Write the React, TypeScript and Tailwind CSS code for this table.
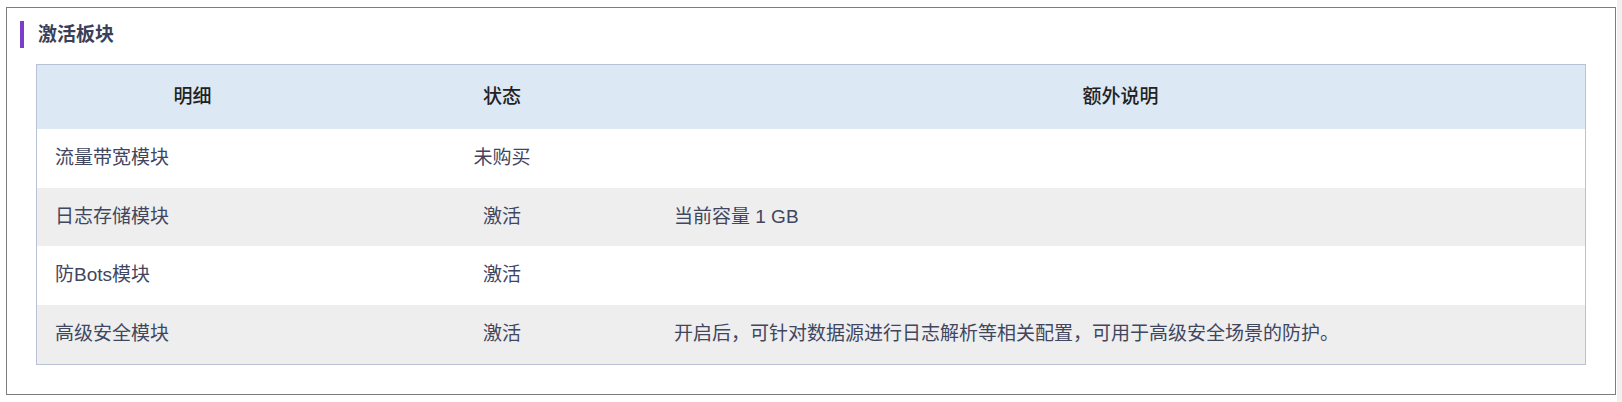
import React from "react";

const rows = [
  { name: "流量带宽模块", status: "未购买", note: "", bg: "bg-white", h: "h-[59px]" },
  { name: "日志存储模块", status: "激活", note: "当前容量 1 GB", bg: "bg-[#eeeeee]", h: "h-[58px]" },
  { name: "防Bots模块", status: "激活", note: "", bg: "bg-white", h: "h-[59px]" },
  {
    name: "高级安全模块",
    status: "激活",
    note: "开启后，可针对数据源进行日志解析等相关配置，可用于高级安全场景的防护。",
    bg: "bg-[#eeeeee]",
    h: "h-[59px]",
  },
];

export default function App() {
  return (
    <div className="flex w-[1622px] h-[402px] bg-white font-['Liberation_Sans','Noto_Sans_CJK_SC',sans-serif] text-[19px]">
      <div className="w-[1617px] pl-[6px] pt-[7px] pr-[1px]">
        <div className="w-[1610px] h-[388px] border border-[#7d7d7d] bg-white">
          <div className="flex items-center mt-[13px] ml-[13px] h-[27px]">
            <div className="w-[4px] h-[27px] bg-[#7a3fc8]" />
            <div className="ml-[14px] font-semibold text-[#3b3f58] leading-none">激活板块</div>
          </div>
          <div className="mx-[29px] mt-[16px] border border-[#b8c1d6]">
            <div className="grid grid-cols-[311px_308px_1fr] h-[64px] bg-[#dde8f5] items-center text-[#222222] font-medium">
              <div className="text-center">明细</div>
              <div className="text-center">状态</div>
              <div className="text-center">额外说明</div>
            </div>
            {rows.map((r) => (
              <div
                key={r.name}
                className={`grid grid-cols-[311px_308px_1fr] items-center text-[#41465f] ${r.bg} ${r.h}`}
              >
                <div className="pl-[18px]">{r.name}</div>
                <div className="text-center">{r.status}</div>
                <div className="pl-[18px]">{r.note}</div>
              </div>
            ))}
          </div>
        </div>
      </div>
      <div className="w-[5px] h-[402px] bg-[#f0f0f0]" />
    </div>
  );
}
